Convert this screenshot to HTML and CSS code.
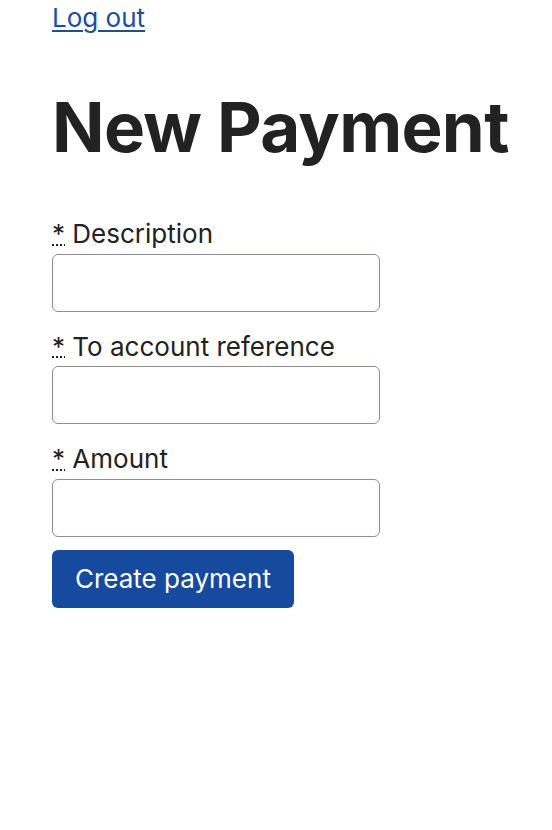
FILE: index.html
```html
<!DOCTYPE html>
<html lang="en">
<head>
<meta charset="utf-8">
<title>New Payment</title>
<link rel="stylesheet" href="styles.css">
</head>
<body>
<main class="page">
  <a class="logout" href="#">Log out</a>
  <h1 class="title">New Payment</h1>
  <form class="form">
    <div class="field">
      <label class="label" for="desc"><abbr class="req" title="required">*</abbr> Description</label>
      <input class="input" id="desc" type="text">
    </div>
    <div class="field">
      <label class="label" for="ref"><abbr class="req" title="required">*</abbr> To account reference</label>
      <input class="input" id="ref" type="text">
    </div>
    <div class="field">
      <label class="label" for="amount"><abbr class="req" title="required">*</abbr> Amount</label>
      <input class="input" id="amount" type="text">
    </div>
    <button class="btn" type="submit">Create payment</button>
  </form>
</main>
</body>
</html>
```
FILE: styles.css
```css
html, body {
  margin: 0;
  padding: 0;
  background: #fff;
}
body {
  font-family: Inter, "Noto Sans", sans-serif;
  font-size: 26px;
  line-height: 1.25;
  color: #222;
}
.page {
  padding: 0 52px;
}
.logout {
  display: inline-block;
  margin-top: 2px;
  color: #1a4fa0;
  text-decoration: underline;
  text-decoration-thickness: 2px;
  text-underline-offset: 3px;
}
.title {
  font-size: 69px;
  font-weight: 700;
  line-height: 1.2;
  letter-spacing: -0.01em;
  white-space: nowrap;
  margin: 51px 0 50px;
  color: #222;
}
.form {
  display: flex;
  flex-direction: column;
}
.field {
  display: flex;
  flex-direction: column;
  gap: 3px;
  margin-bottom: 19px;
}
.field:last-of-type {
  margin-bottom: 13px;
}
.label {
  display: block;
}
.req {
  text-decoration: underline dotted;
  text-decoration-thickness: 2px;
}
.input {
  box-sizing: border-box;
  width: 328px;
  height: 58px;
  border: 1px solid #8c8ca1;
  border-radius: 6px;
  font: inherit;
  padding: 0 12px;
  background: #fff;
}
.btn {
  align-self: flex-start;
  box-sizing: border-box;
  height: 58px;
  padding: 0 23px;
  background: #164a9e;
  color: #fff;
  border: none;
  border-radius: 6px;
  font: inherit;
  cursor: pointer;
}
```
